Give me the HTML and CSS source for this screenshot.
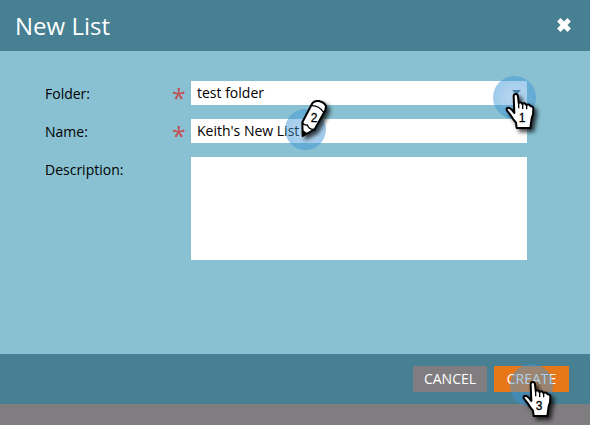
FILE: index.html
```html
<!DOCTYPE html>
<html lang="en">
<head>
<meta charset="utf-8">
<title>New List</title>
<link rel="stylesheet" href="styles.css">
</head>
<body>
<svg class="defs" width="0" height="0" aria-hidden="true">
  <symbol id="hand" viewBox="0 0 96 120" overflow="visible">
    <path class="ink" d="M29 13Q29 6 35 6Q41 6 42 13L44 33Q51 28 55 36Q62 30 67 39Q75 34 80 43Q87 42 88 50Q89 66 83 79L79 108H38L36 92Q28 83 21 71L9 56Q5 47 14 47Q22 49 31 63Z"/>
    <path class="fold" d="M44 31V49M56 35V51M68 38V52"/>
  </symbol>
</svg>
<div class="dialog">
  <header class="header">
    <h1 class="title">New List</h1>
    <svg class="close" viewBox="0 0 14 14"><path d="M1.8 1.8L12.2 12.2M12.2 1.8L1.8 12.2"/></svg>
  </header>
  <main class="form">
    <div class="row"><span class="label">Folder:</span><span class="required">*</span><div class="field">test folder<span class="arrow"></span></div></div>
    <div class="row"><span class="label">Name:</span><span class="required">*</span><div class="field">Keith's New List</div></div>
    <div class="row tall"><span class="label">Description:</span><span class="required"></span><div class="field area"></div></div>
  </main>
  <footer class="footer">
    <button class="button">CANCEL</button>
    <button class="button primary">CREATE</button>
  </footer>
</div>
<div class="marker folder-marker"><svg class="pointer"><use href="#hand"/></svg><span class="number">1</span></div>
<div class="marker name-marker">
  <svg class="pencil" viewBox="0 0 90 120">
    <path class="ink" d="M7 73L37 16Q42 7 57 9Q73 13 78 24L76 37L44 94L8 114Z"/>
    <path class="fold" d="M35 23Q56 22 71 43M7 74Q12 83 22 81Q27 95 42 94"/>
    <path class="tip" d="M7 95L21 105L7 115Z"/>
  </svg><span class="number">2</span>
</div>
<div class="marker create-marker"><svg class="pointer"><use href="#hand"/></svg><span class="number">3</span></div>
</body>
</html>
```
FILE: styles.css
```css
* { box-sizing: border-box; }
body {
  margin: 0;
  height: 425px;
  overflow: hidden;
  background: #807d80;
  font: 14px/20px "Open Sans", "Noto Sans", sans-serif;
  color: #000;
}
.defs { position: absolute; }
.dialog { height: 404px; display: flex; flex-direction: column; }
.header {
  height: 51px;
  padding: 0 19px 0 15px;
  display: flex;
  align-items: center;
  justify-content: space-between;
  background: #478092;
}
.title { margin: 0; color: #fff; font-size: 24px; font-weight: 400; line-height: 50px; }
.close { width: 14px; height: 14px; margin-bottom: 1px; overflow: visible; fill: none; stroke: #fff; stroke-width: 4.8; }
.form {
  flex: 1;
  padding: 30px 63px 0 45px;
  display: flex;
  flex-direction: column;
  gap: 14px;
  background: #89c1d2;
}
.row { display: flex; height: 24px; line-height: 26px; }
.tall { height: 103px; }
.label { width: 127px; }
.required { width: 19px; height: 24px; color: #c45154; font-size: 25px; line-height: 32px; }
.field {
  width: 336px;
  height: 24px;
  padding: 0 6px;
  display: flex;
  justify-content: space-between;
  line-height: 24px;
  background: #fff;
}
.area { height: 103px; }
.arrow { margin-top: 9px; width: 9px; height: 5px; background: #466e86; clip-path: polygon(0 0, 100% 0, 50% 100%); }
.footer {
  height: 50px;
  padding: 12px 21px 0 0;
  display: flex;
  justify-content: flex-end;
  gap: 7px;
  background: #478092;
}
.button {
  width: 74px;
  height: 26px;
  padding: 0;
  border: 0;
  background: #807d80;
  color: #fff;
  font: 14px/26px "Open Sans", "Noto Sans", sans-serif;
}
.primary { width: 75px; background: #e8771a; }
.marker {
  position: absolute;
  width: 43px;
  height: 43px;
  border-radius: 50%;
  background: radial-gradient(circle, rgba(75, 151, 212, .38), rgba(55, 148, 218, .54));
}
.folder-marker { left: 493px; top: 76px; }
.name-marker { left: 285px; top: 109px; width: 41px; height: 41px; }
.create-marker { left: 510px; top: 364px; }
.pointer, .pencil {
  position: absolute;
  overflow: visible;
  filter: drop-shadow(3px 3px 2px rgba(0, 0, 0, .75));
}
.pointer { left: 11px; top: 16px; width: 32px; height: 40px; }
.pencil { left: 15px; top: -11px; width: 30px; height: 40px; }
.ink { fill: #fff; stroke: #000; stroke-width: 6; stroke-linejoin: round; }
.fold { fill: none; stroke: #000; stroke-width: 4; }
.tip { fill: #000; }
.number {
  position: absolute;
  left: 25px;
  top: 35px;
  width: 8px;
  color: #000;
  text-align: center;
  font: 12px/14px "Liberation Sans", sans-serif;
  -webkit-text-stroke: .3px #000;
}
.name-marker .number { left: 25px; top: 2px; }
```
